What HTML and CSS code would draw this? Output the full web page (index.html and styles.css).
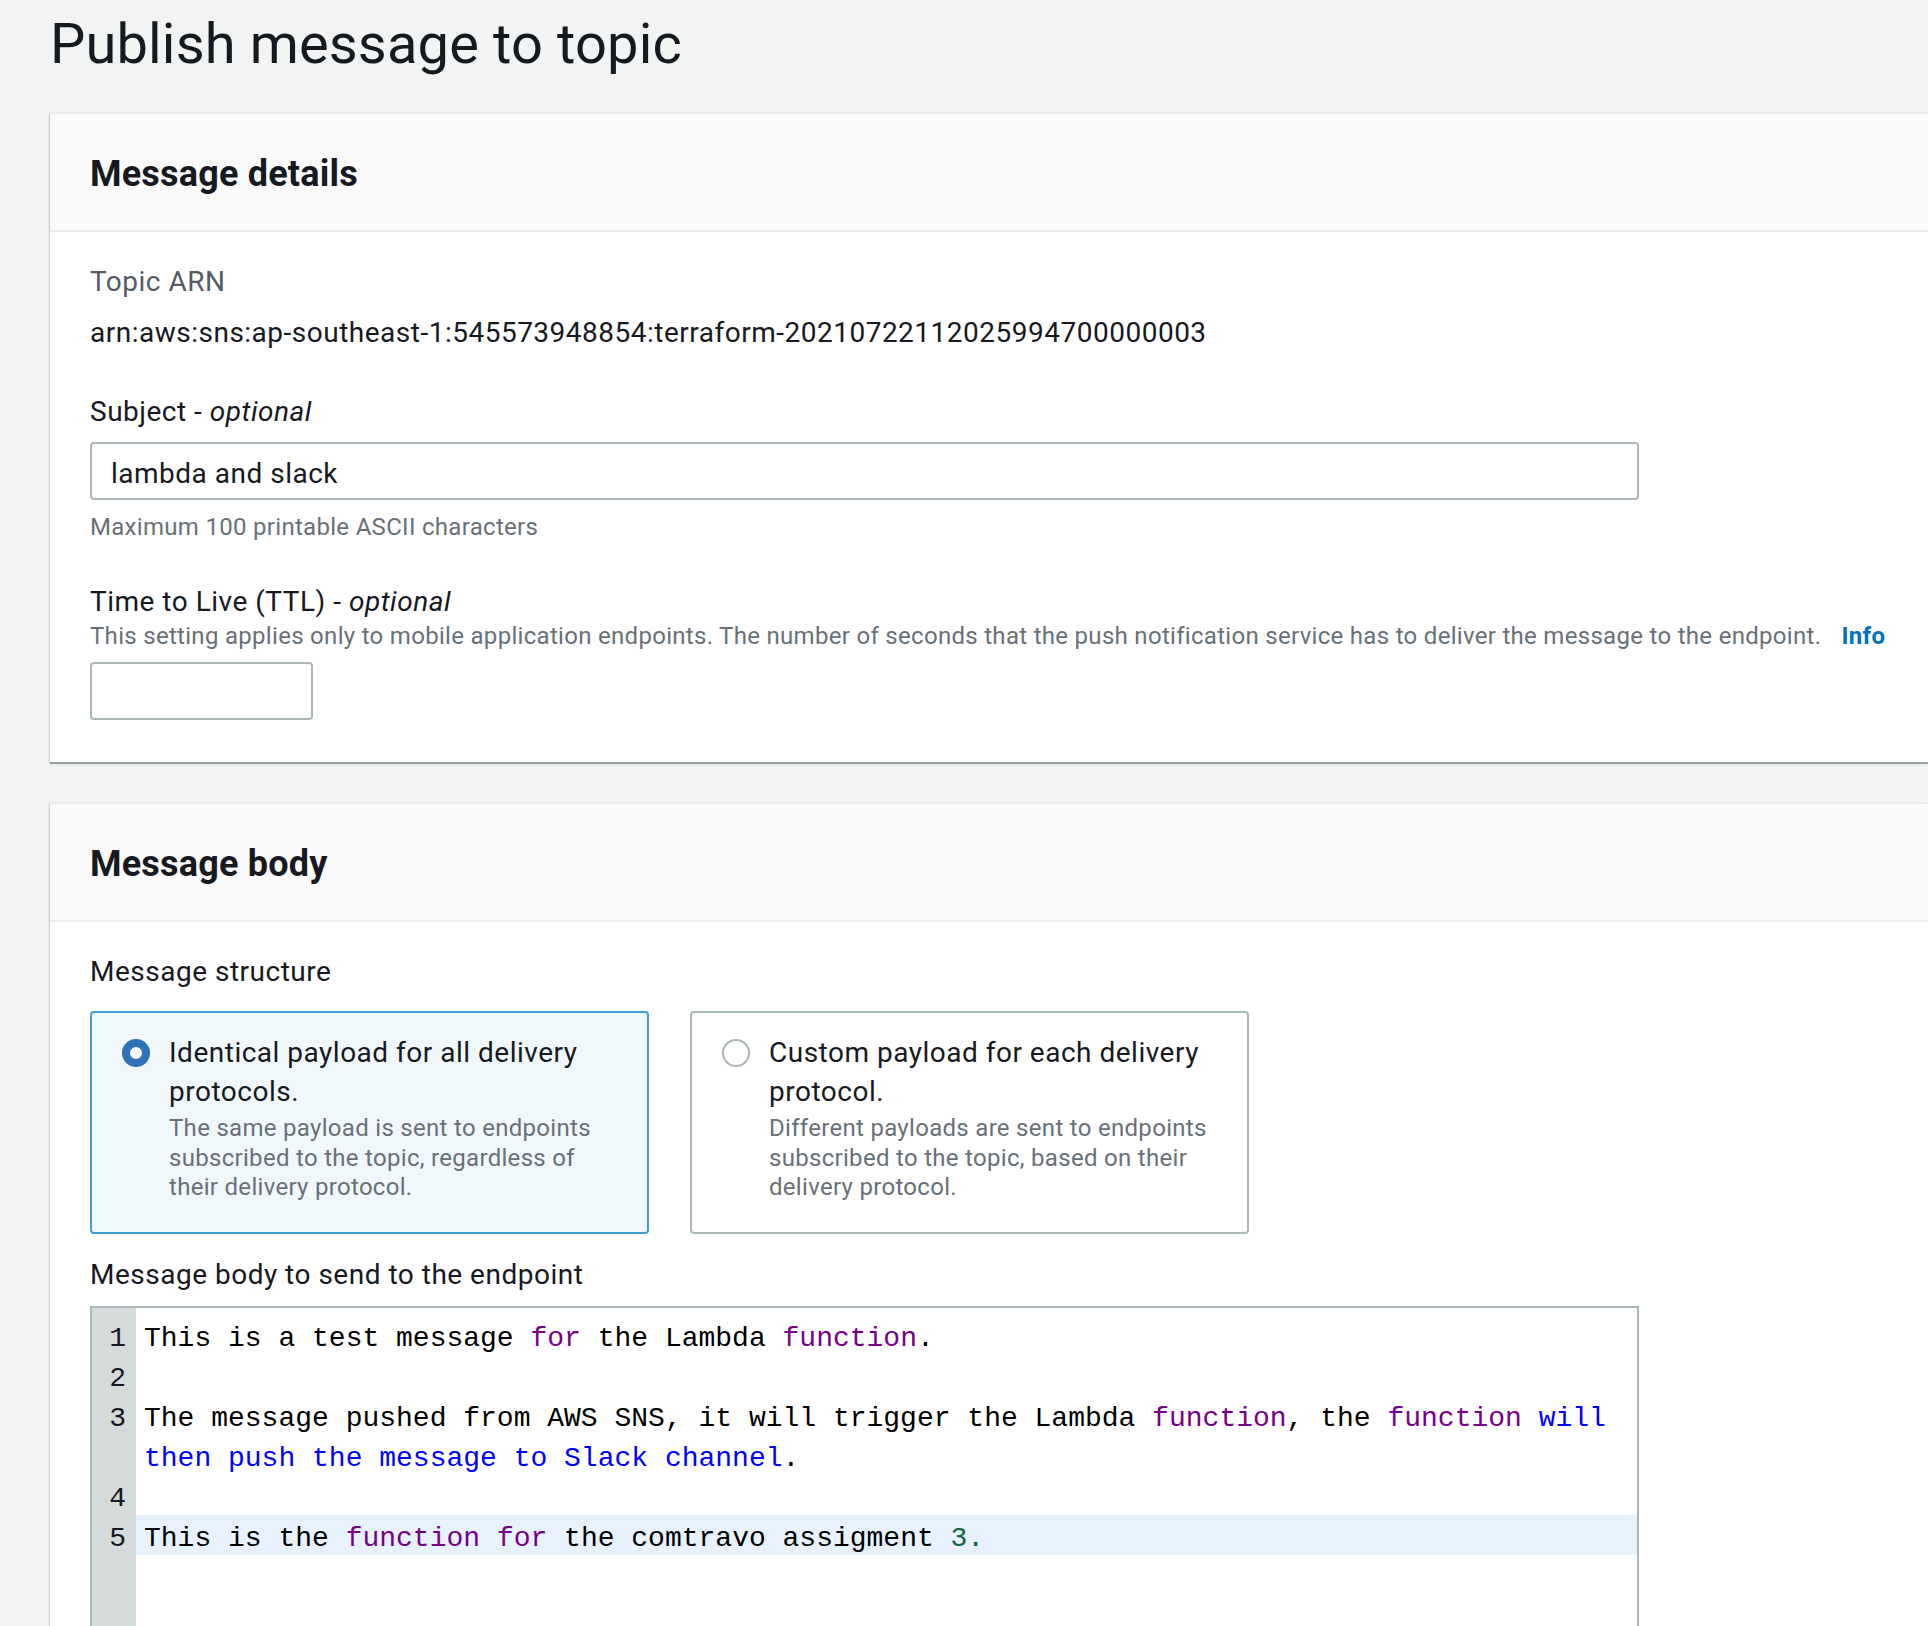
FILE: index.html
```html
<!DOCTYPE html>
<html lang="en">
<head>
<meta charset="utf-8">
<title>Publish message to topic</title>
<link rel="stylesheet" href="styles.css">
</head>
<body>
<main class="page">
  <h1 class="page-title">Publish message to topic</h1>

  <section class="card">
    <header class="card-header"><h2>Message details</h2></header>
    <div class="card-body">
      <div class="kv-label">Topic ARN</div>
      <div class="kv-value">arn:aws:sns:ap-southeast-1:545573948854:terraform-20210722112025994700000003</div>

      <div class="field field-subject">
        <div class="field-label">Subject - <i>optional</i></div>
        <input class="text-input wide" type="text" value="lambda and slack">
        <div class="constraint">Maximum 100 printable ASCII characters</div>
      </div>

      <div class="field field-ttl">
        <div class="field-label">Time to Live (TTL) - <i>optional</i></div>
        <div class="field-desc">This setting applies only to mobile application endpoints. The number of seconds that the push notification service has to deliver the message to the endpoint. <a class="info" href="#">Info</a></div>
        <input class="text-input narrow" type="text" value="">
      </div>
    </div>
  </section>

  <section class="card">
    <header class="card-header"><h2>Message body</h2></header>
    <div class="card-body">
      <div class="field-label">Message structure</div>
      <div class="tiles">
        <div class="tile selected">
          <span class="radio checked"></span>
          <div class="tile-text">
            <div class="tile-title">Identical payload for all delivery protocols.</div>
            <div class="tile-desc">The same payload is sent to endpoints subscribed to the topic, regardless of their delivery protocol.</div>
          </div>
        </div>
        <div class="tile">
          <span class="radio"></span>
          <div class="tile-text">
            <div class="tile-title">Custom payload for each delivery protocol.</div>
            <div class="tile-desc">Different payloads are sent to endpoints subscribed to the topic, based on their delivery protocol.</div>
          </div>
        </div>
      </div>

      <div class="field-label body-label">Message body to send to the endpoint</div>
      <div class="editor">
        <div class="code-line"><span class="ln">1</span><span class="lt"><span class="tx">This is a test message <span class="kw">for</span> the Lambda <span class="kw">function</span>.</span></span></div>
        <div class="code-line"><span class="ln">2</span><span class="lt"></span></div>
        <div class="code-line"><span class="ln">3</span><span class="lt"><span class="tx">The message pushed from AWS SNS, it will trigger the Lambda <span class="kw">function</span>, the <span class="kw">function</span> <span class="str">will</span>
<span class="str">then push the message to Slack channel</span>.</span></span></div>
        <div class="code-line"><span class="ln">4</span><span class="lt"></span></div>
        <div class="code-line active"><span class="ln">5</span><span class="lt"><span class="tx">This is the <span class="kw">function</span> <span class="kw">for</span> the comtravo assigment <span class="num">3.</span></span></span></div>
      </div>
    </div>
  </section>
</main>
</body>
</html>
```
FILE: styles.css
```css
html, body {
  margin: 0;
  height: 100%;
  overflow: hidden;
}

body {
  background: #f2f3f3;
  font-family: Roboto, "Noto Sans", sans-serif;
  color: #16191f;
  letter-spacing: 0.5px;
}

.page {
  padding: 12px 0 0 50px;
}

.page-title {
  margin: 0 0 36px;
  font-size: 56px;
  line-height: 64px;
  font-weight: 400;
  letter-spacing: 0.15px;
}

.card {
  background: #fff;
  border-top: 2px solid #eaeded;
  box-shadow: 0 2px 1px rgba(0, 28, 36, 0.32), -1px 1px 2px rgba(0, 28, 36, 0.15);
}

.card + .card {
  margin-top: 40px;
}

.card-header {
  background: #fafafa;
  padding: 38px 40px 34px;
  border-bottom: 2px solid #eaeded;
}

.card-header h2 {
  margin: 0;
  font-size: 36px;
  line-height: 44px;
  font-weight: 700;
  letter-spacing: 0.2px;
}

.card-body {
  padding: 28px 40px 42px;
}

.kv-label {
  font-size: 28px;
  line-height: 44px;
  color: #545b64;
}

.kv-value {
  margin-top: 7px;
  font-size: 28px;
  line-height: 44px;
}

.field-label {
  font-size: 28px;
  line-height: 44px;
}

.field-subject {
  margin-top: 35px;
}

.text-input {
  display: block;
  box-sizing: border-box;
  height: 58px;
  margin: 8px 0 0;
  padding: 4px 19px 0;
  border: 2px solid #aab7b8;
  border-radius: 4px;
  background: #fff;
  font-family: Roboto, "Noto Sans", sans-serif;
  font-size: 28px;
  letter-spacing: 0.5px;
  color: #16191f;
  outline: none;
}

.text-input.wide {
  width: 1549px;
}

.text-input.narrow {
  width: 223px;
  margin-top: 14px;
}

.constraint {
  margin-top: 11px;
  font-size: 24px;
  line-height: 32px;
  color: #687078;
  letter-spacing: 0.3px;
}

.field-ttl {
  margin-top: 37px;
}

.field-desc {
  font-size: 24px;
  line-height: 24px;
  color: #687078;
  letter-spacing: 0.3px;
}

.info {
  margin-left: 14px;
  color: #0073bb;
  font-weight: 700;
  text-decoration: none;
}

.tiles {
  display: grid;
  grid-template-columns: 559px 559px;
  column-gap: 41px;
  margin-top: 17px;
}

.tile {
  display: flex;
  gap: 19px;
  box-sizing: border-box;
  padding: 20px 36px 29.5px 30px;
  border: 2px solid #aab7b8;
  border-radius: 4px;
  background: #fff;
}

.tile.selected {
  border-color: #3f9fcf;
  background: #f1f8fc;
}

.radio {
  flex: none;
  box-sizing: border-box;
  width: 28px;
  height: 28px;
  margin-top: 5.5px;
  border: 2px solid #aab7b8;
  border-radius: 50%;
  background: #fff;
}

.radio.checked {
  border: 8px solid #2e72b8;
}

.tile-title {
  font-size: 28px;
  line-height: 39px;
}

.tile-desc {
  margin-top: 3px;
  font-size: 24px;
  line-height: 29.5px;
  color: #687078;
  letter-spacing: 0.3px;
}

.body-label {
  margin-top: 19px;
}

.editor {
  box-sizing: border-box;
  width: 1549px;
  height: 420px;
  margin-top: 9px;
  padding-top: 7px;
  border: 2px solid #aab7b8;
  background: linear-gradient(to right, #d5dbdb 44px, #fff 44px);
}

.code-line {
  display: grid;
  grid-template-columns: 44px 1fr;
  min-height: 40px;
  font-family: "Liberation Mono", "DejaVu Sans Mono", monospace;
  font-size: 28px;
  line-height: 40px;
  letter-spacing: 0;
}

.ln {
  box-sizing: border-box;
  height: 40px;
  padding: 8px 10px 0 0;
  line-height: 32px;
  text-align: right;
  color: #16191f;
}

.lt {
  padding-left: 8px;
  white-space: pre;
  color: #000;
}

.tx {
  line-height: 28px;
  vertical-align: -4px;
}

.code-line.active .lt {
  background: #e8f2ff;
}

.kw {
  color: #770088;
}

.str {
  color: #0000ff;
}

.num {
  color: #116644;
}
```
